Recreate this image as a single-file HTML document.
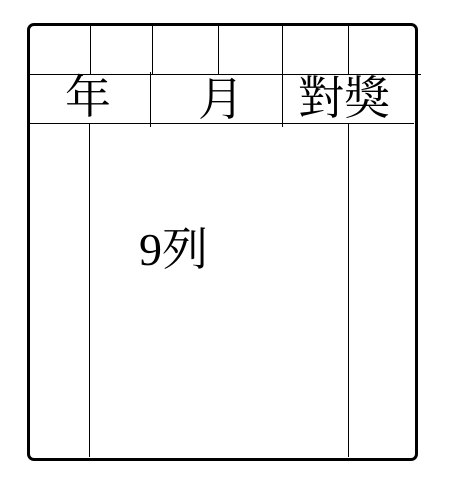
<!DOCTYPE html>
<html><head><meta charset="utf-8"><style>
body{margin:0;width:449px;height:481px;background:#fff;position:relative;overflow:hidden}
.box{position:absolute;left:27px;top:23px;width:385px;height:432px;border:3px solid #000;border-radius:7px}
.v,.h{position:absolute;background:#000}
.v{width:1px}.h{height:1px}
.t{position:absolute;font-family:"Liberation Serif","Noto Serif CJK SC","Noto Serif CJK TC",serif;font-size:46px;line-height:1;color:#000}
</style></head><body>
<div class="box"></div>
<div class="h" style="left:28px;top:74px;width:393px"></div>
<div class="h" style="left:28px;top:123px;width:386px"></div>
<div class="v" style="left:90px;top:25px;height:49px"></div>
<div class="v" style="left:152px;top:25px;height:49px"></div>
<div class="v" style="left:218px;top:25px;height:49px"></div>
<div class="v" style="left:282px;top:25px;height:49px"></div>
<div class="v" style="left:348px;top:25px;height:49px"></div>
<div class="v" style="left:150px;top:72px;height:55px"></div>
<div class="v" style="left:282px;top:74px;height:53px"></div>
<div class="v" style="left:89px;top:123px;height:334px"></div>
<div class="v" style="left:348px;top:123px;height:334px"></div>
<div class="t" style="left:65px;top:75px">年</div>
<div class="t" style="left:198px;top:77px">月</div>
<div class="t" style="left:298px;top:76px">對獎</div>
<div class="t" style="left:139px;top:227px">9列</div>
</body></html>
